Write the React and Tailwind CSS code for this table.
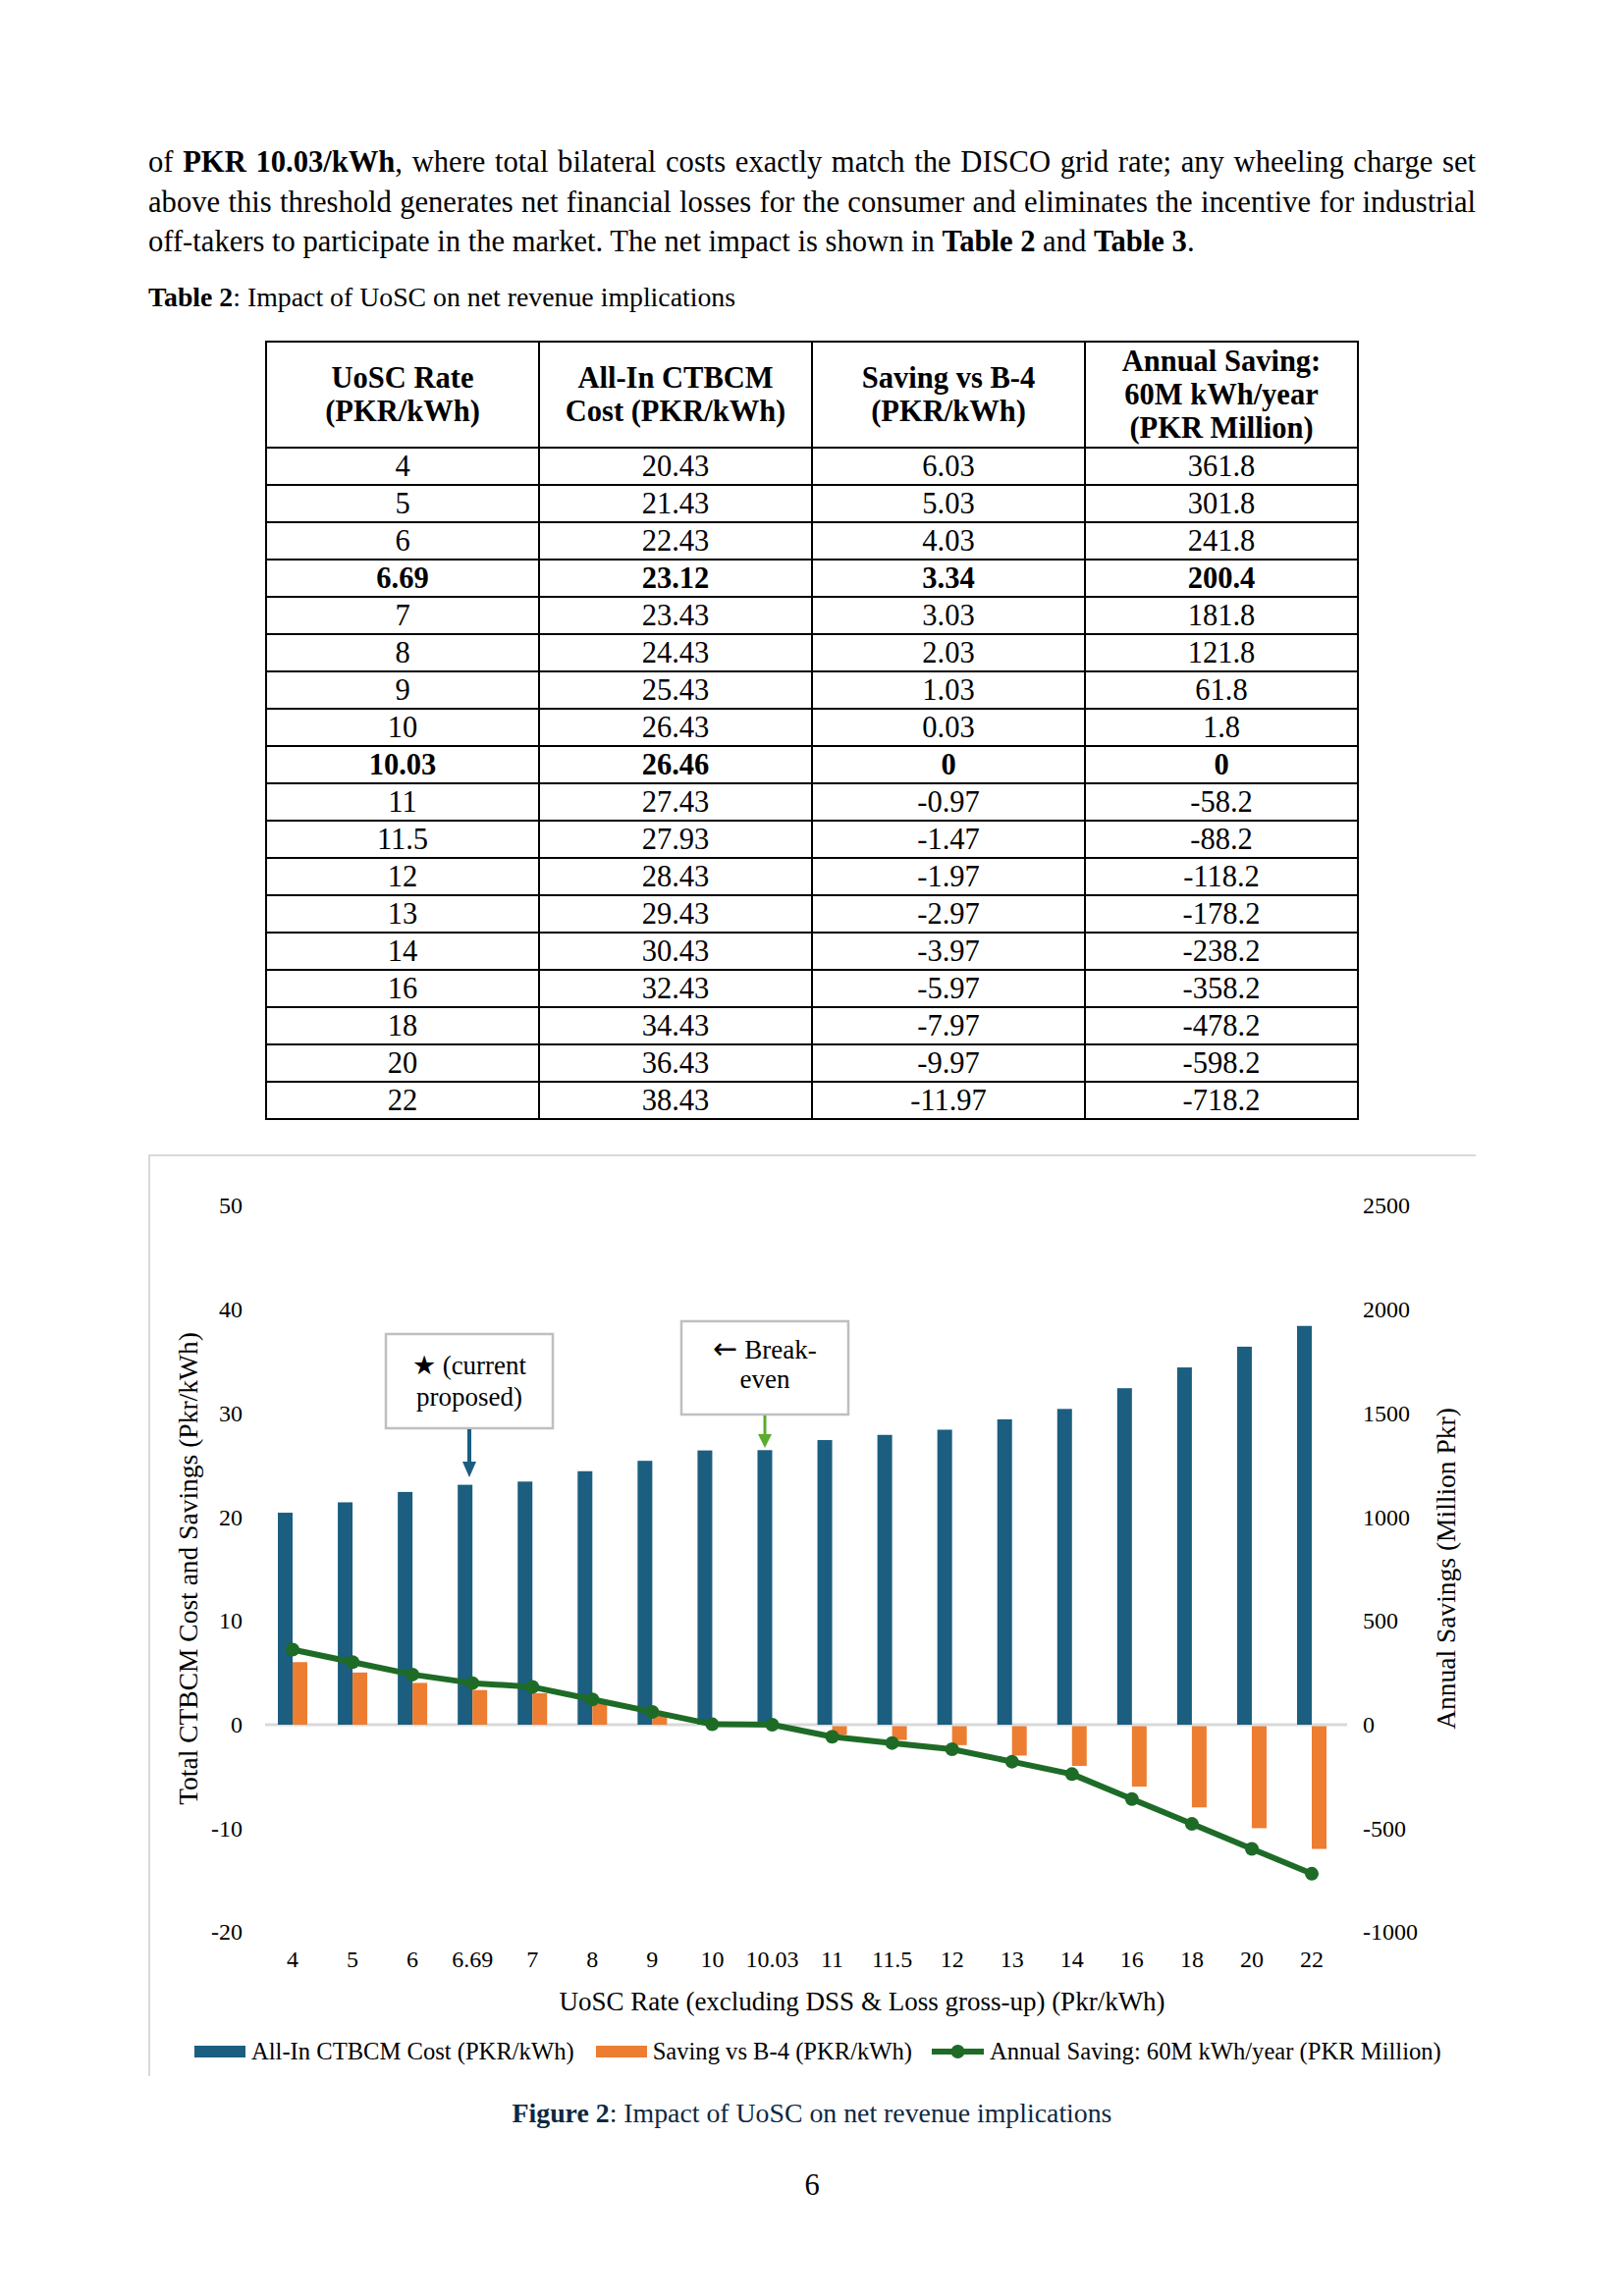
const rows = [
  ['4', '20.43', '6.03', '361.8'],
  ['5', '21.43', '5.03', '301.8'],
  ['6', '22.43', '4.03', '241.8'],
  ['6.69', '23.12', '3.34', '200.4'],
  ['7', '23.43', '3.03', '181.8'],
  ['8', '24.43', '2.03', '121.8'],
  ['9', '25.43', '1.03', '61.8'],
  ['10', '26.43', '0.03', '1.8'],
  ['10.03', '26.46', '0', '0'],
  ['11', '27.43', '-0.97', '-58.2'],
  ['11.5', '27.93', '-1.47', '-88.2'],
  ['12', '28.43', '-1.97', '-118.2'],
  ['13', '29.43', '-2.97', '-178.2'],
  ['14', '30.43', '-3.97', '-238.2'],
  ['16', '32.43', '-5.97', '-358.2'],
  ['18', '34.43', '-7.97', '-478.2'],
  ['20', '36.43', '-9.97', '-598.2'],
  ['22', '38.43', '-11.97', '-718.2'],
];

const BLUE = '#1b5e80';
const ORANGE = '#ed7d31';
const GREEN = '#1e6b27';

// chart geometry (px, relative to the chart box corner)
const X0 = 147;
const STEP = 61.06;
const Y0 = 581;
const K = 10.571;
const yv = (v) => Y0 - v * K;
const cx = (i) => X0 + STEP * i;

function Chart() {
  const pts = rows.map((r, i) => `${cx(i)},${yv(parseFloat(r[3]) / 50)}`).join(' ');

  return (
    <div className="mt-[35px] border-l-2 border-t-2 border-[#d9d9d9] pb-[10px]">
      <svg width="1350" height="843" viewBox="2 2 1350 843" className="block">
        {/* left axis */}
        {[50, 40, 30, 20, 10, 0, -10, -20].map((v) => (
          <text key={v} x="96" y={yv(v) + 8} textAnchor="end" fontSize="24" fill="#000">
            {v}
          </text>
        ))}
        {/* right axis */}
        {[2500, 2000, 1500, 1000, 500, 0, -500, -1000].map((v) => (
          <text key={v} x="1237" y={yv(v / 50) + 8} fontSize="24" fill="#000">
            {v}
          </text>
        ))}
        <text
          transform="translate(40 422) rotate(-90)"
          textAnchor="middle"
          dominantBaseline="central"
          fontSize="27.5"
          fill="#000"
        >
          Total CTBCM Cost and Savings (Pkr/kWh)
        </text>
        <text
          transform="translate(1321 422) rotate(-90)"
          textAnchor="middle"
          dominantBaseline="central"
          fontSize="27.5"
          fill="#000"
        >
          Annual Savings (Million Pkr)
        </text>

        <line x1="119" y1={Y0} x2="1221" y2={Y0} stroke="#d9d9d9" strokeWidth="3" />

        {rows.map((r, i) => {
          const cost = parseFloat(r[1]);
          const sav = parseFloat(r[2]);
          return (
            <g key={r[0]}>
              <rect x={cx(i) - 15} y={yv(cost)} width="15" height={Y0 - yv(cost)} fill={BLUE} />
              {sav !== 0 && (
                <rect
                  x={cx(i)}
                  y={sav > 0 ? yv(sav) : Y0 + 1.5}
                  width="15"
                  height={sav > 0 ? Y0 - yv(sav) : yv(sav) - Y0 - 1.5}
                  fill={ORANGE}
                />
              )}
            </g>
          );
        })}

        <polyline points={pts} fill="none" stroke={GREEN} strokeWidth="6" strokeLinejoin="round" />
        {rows.map((r, i) => (
          <circle key={r[0]} cx={cx(i)} cy={yv(parseFloat(r[3]) / 50)} r="7" fill={GREEN} />
        ))}

        {rows.map((r, i) => (
          <text key={r[0]} x={cx(i)} y="828" textAnchor="middle" fontSize="24" fill="#000">
            {r[0]}
          </text>
        ))}

        {/* current proposed callout */}
        <rect x="242" y="183" width="170" height="96" fill="#fff" stroke="#bfbfbf" strokeWidth="2.5" />
        <text x="327" y="224" textAnchor="middle" fontSize="27" fill="#000">
          ★ (current
        </text>
        <text x="327" y="256" textAnchor="middle" fontSize="27" fill="#000">
          proposed)
        </text>
        <line x1="327" y1="280" x2="327" y2="316" stroke={BLUE} strokeWidth="4" />
        <polygon points="320,313 334,313 327,329" fill={BLUE} />

        {/* break-even callout */}
        <rect x="543" y="170" width="170" height="95" fill="#fff" stroke="#bfbfbf" strokeWidth="2.5" />
        <text x="628" y="208" textAnchor="middle" fontSize="27" fill="#000">
          <tspan className="font-['DejaVu_Sans']" fontSize="30">
            ←
          </tspan>{' '}
          Break-
        </text>
        <text x="628" y="238" textAnchor="middle" fontSize="27" fill="#000">
          even
        </text>
        <line x1="628" y1="266" x2="628" y2="287" stroke="#5aac2e" strokeWidth="3" />
        <polygon points="621,285 635,285 628,299" fill="#5aac2e" />
      </svg>

      <div className="pl-[100px] text-center text-[27px] leading-[36px]">
        UoSC Rate (excluding DSS &amp; Loss gross-up) (Pkr/kWh)
      </div>

      <div className="mt-[18px] flex items-center pl-[45px] text-[24.6px] leading-[30px]">
        <div className="flex items-center">
          <span className="mr-[6px] block h-[12px] w-[52px] bg-[#1b5e80]" />
          All-In CTBCM Cost (PKR/kWh)
        </div>
        <div className="ml-[22px] flex items-center">
          <span className="mr-[6px] block h-[12px] w-[52px] bg-[#ed7d31]" />
          Saving vs B-4 (PKR/kWh)
        </div>
        <div className="ml-[20px] flex items-center">
          <svg width="53" height="16" className="mr-[6px] block">
            <line x1="0" y1="8" x2="53" y2="8" stroke={GREEN} strokeWidth="6" />
            <circle cx="26.5" cy="8" r="7" fill={GREEN} />
          </svg>
          Annual Saving: 60M kWh/year (PKR Million)
        </div>
      </div>
    </div>
  );
}

const cell = 'h-[38px] border-2 border-black p-0 text-center align-middle leading-[30px]';
const head = 'h-[108px] border-2 border-black p-0 align-middle font-bold leading-[34px]';

export default function App() {
  return (
    <div className="min-h-[2339px] w-[1654px] bg-white font-['Liberation_Serif',serif] text-black">
      <div className="ml-[151px] w-[1352px] pt-[145px]">
        <div className="text-[30.6px] leading-[40.5px]">
          <p className="text-justify [text-align-last:justify]">
            of <b>PKR 10.03/kWh</b>, where total bilateral costs exactly match the DISCO grid rate; any wheeling charge set
          </p>
          <p className="text-justify [text-align-last:justify]">
            above this threshold generates net financial losses for the consumer and eliminates the incentive for industrial
          </p>
          <p>
            off-takers to participate in the market. The net impact is shown in <b>Table 2</b> and <b>Table 3</b>.
          </p>
        </div>

        <p className="mt-[18px] text-[27.8px] leading-[35px]">
          <b>Table 2</b>: Impact of UoSC on net revenue implications
        </p>

        <table className="mx-auto mt-[27px] w-[1114px] table-fixed border-collapse text-[30.5px]">
          <thead>
            <tr>
              <th className={head}>
                UoSC Rate
                <br />
                (PKR/kWh)
              </th>
              <th className={head}>
                All-In CTBCM
                <br />
                Cost (PKR/kWh)
              </th>
              <th className={head}>
                Saving vs B-4
                <br />
                (PKR/kWh)
              </th>
              <th className={head}>
                Annual Saving:
                <br />
                60M kWh/year
                <br />
                (PKR Million)
              </th>
            </tr>
          </thead>
          <tbody>
            {rows.map((r, i) => {
              const bold = i === 3 || i === 8;
              return (
                <tr key={r[0]}>
                  {r.map((c, j) => (
                    <td key={j} className={bold ? cell + ' font-bold' : cell}>
                      {c}
                    </td>
                  ))}
                </tr>
              );
            })}
          </tbody>
        </table>

        <Chart />

        <p className="mt-[20px] text-center text-[27.8px] leading-[35px] text-[#0e2841]">
          <b>Figure 2</b>: Impact of UoSC on net revenue implications
        </p>
        <p className="mt-[37px] text-center text-[30.5px] leading-[38px]">6</p>
      </div>
    </div>
  );
}
